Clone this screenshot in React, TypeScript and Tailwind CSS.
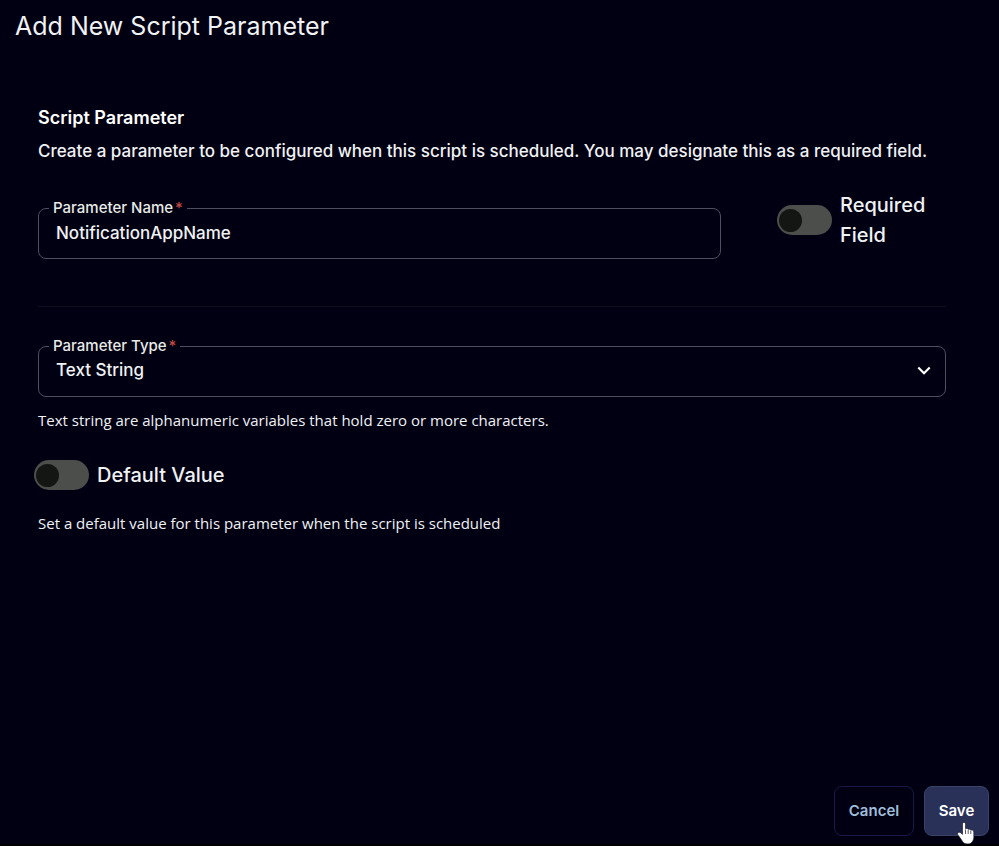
import { useState, type ReactNode } from 'react'

interface OutlinedFieldProps {
  id: string
  label: string
  className?: string
  children: ReactNode
}

function OutlinedField({ id, label, className = '', children }: OutlinedFieldProps) {
  return (
    <fieldset className={`min-w-0 rounded-lg border border-[#4e4d61] px-2.5 pb-2 ${className}`}>
      <legend className="px-1 text-[15px] leading-4 font-medium text-[#e9ebe6]">
        <label htmlFor={id} className="flex gap-0.5">
          {label}
          <span className="text-[#c04a42]">*</span>
        </label>
      </legend>
      {children}
    </fieldset>
  )
}

interface ToggleProps {
  label: string
  checked: boolean
  onChange: (checked: boolean) => void
}

function Toggle({ label, checked, onChange }: ToggleProps) {
  return (
    <label className="flex items-center gap-2 text-xl leading-[30px] font-medium text-[#f0f2f4]">
      <input
        type="checkbox"
        checked={checked}
        onChange={(e) => onChange(e.target.checked)}
        className="flex h-[30px] w-[55px] shrink-0 appearance-none items-center rounded-full bg-[#4b4e4a] px-0.5 before:size-[23px] before:rounded-full before:bg-[#131613] checked:justify-end checked:bg-[#2c3260]"
      />
      <span>{label}</span>
    </label>
  )
}

function ChevronIcon() {
  return (
    <svg
      viewBox="0 0 14 10"
      className="pointer-events-none absolute top-3 right-1 h-2.5 w-3.5"
      fill="none"
      stroke="#fff"
      strokeWidth="2.2"
      aria-hidden="true"
    >
      <path d="M1.3 1.5 7 7.2l5.7-5.7" />
    </svg>
  )
}

function PointerIcon() {
  return (
    <svg
      viewBox="0 0 18 24"
      className="pointer-events-none absolute top-9 right-3.5 h-6 w-[18px]"
      aria-hidden="true"
    >
      <path
        d="M5.500 2c0-1.100.7-1.600 1.500-1.600s1.500.5 1.500 1.600v4.800c.6-.5 2.300-.5 2.700.5.9-.4 2.200-.1 2.500.9 1.500-.4 3.100.2 3.100 1.900v5.600c0 1.700-.8 2.900-1.400 3.900-1 1.600-2.200 2.300-4.400 2.300-2.600 0-4.200-.5-5.300-2.200C4.300 17.600 3.200 15.800 1.600 13.800c-.8-1-1.300-1.800-1-2.600.4-1.200 2.100-1.300 3.300-.3l1.600 1.500z"
        fill="#fff"
        stroke="#0b0b1c"
        strokeWidth="0.6"
      />
      <path d="M8.500 7.500V12M11.200 8v4M13.800 9v3" stroke="#15152a" strokeWidth="0.7" />
    </svg>
  )
}

export default function App() {
  const [name, setName] = useState('NotificationAppName')
  const [type, setType] = useState('text')
  const [required, setRequired] = useState(false)
  const [hasDefault, setHasDefault] = useState(false)

  return (
    <form
      onSubmit={(e) => e.preventDefault()}
      className="flex min-h-screen flex-col border-b-2 border-black bg-[#000012] font-['Inter',sans-serif] text-[#f0f2f4]"
    >
      <header className="px-[15px] pt-2">
        <h1 className="text-[25px] leading-9">Add New Script Parameter</h1>
      </header>

      <main className="flex-1 pt-16 pr-[53px] pb-8 pl-[38px]">
        <h2 className="text-lg leading-5 font-semibold text-white">Script Parameter</h2>
        <p className="mt-[11px] text-[17px] leading-6 font-medium">
          Create a parameter to be configured when this script is scheduled. You may designate this
          as a required field.
        </p>

        <div className="mt-[27px] flex items-start border-b border-[#11101f] pb-[47px]">
          <OutlinedField id="param-name" label="Parameter Name" className="mt-2.5 flex-1">
            <input
              id="param-name"
              type="text"
              value={name}
              onChange={(e) => setName(e.target.value)}
              className="h-[34px] w-full bg-transparent px-[7px] text-[17px] font-medium outline-none"
            />
          </OutlinedField>
          <div className="ml-14 w-[169px]">
            <Toggle label="Required Field" checked={required} onChange={setRequired} />
          </div>
        </div>

        <OutlinedField id="param-type" label="Parameter Type" className="mt-[31px]">
          <div className="relative">
            <select
              id="param-type"
              value={type}
              onChange={(e) => setType(e.target.value)}
              className="h-[34px] w-full appearance-none bg-transparent px-[7px] text-[17px] font-medium outline-none"
            >
              <option value="text">Text String</option>
            </select>
            <ChevronIcon />
          </div>
        </OutlinedField>
        <p className="mt-[11px] font-['Open_Sans',sans-serif] text-[15px] leading-6 font-medium">
          Text string are alphanumeric variables that hold zero or more characters.
        </p>

        <div className="mt-7 -ml-1">
          <Toggle label="Default Value" checked={hasDefault} onChange={setHasDefault} />
        </div>
        <p className="mt-[21px] font-['Open_Sans',sans-serif] text-[15px] leading-6 font-medium">
          Set a default value for this parameter when the script is scheduled
        </p>
      </main>

      <footer className="flex justify-end gap-2.5 px-2.5 pb-2">
        <button
          type="button"
          className="h-[50px] w-20 rounded-lg border border-[#19194a] text-[15px] font-semibold text-[#9fbdda]"
        >
          Cancel
        </button>
        <div className="relative">
          <button
            type="submit"
            className="h-[50px] w-[65px] rounded-lg border border-[#3b4268] bg-[#293159] text-[15px] font-semibold text-white"
          >
            Save
          </button>
          <PointerIcon />
        </div>
      </footer>
    </form>
  )
}
